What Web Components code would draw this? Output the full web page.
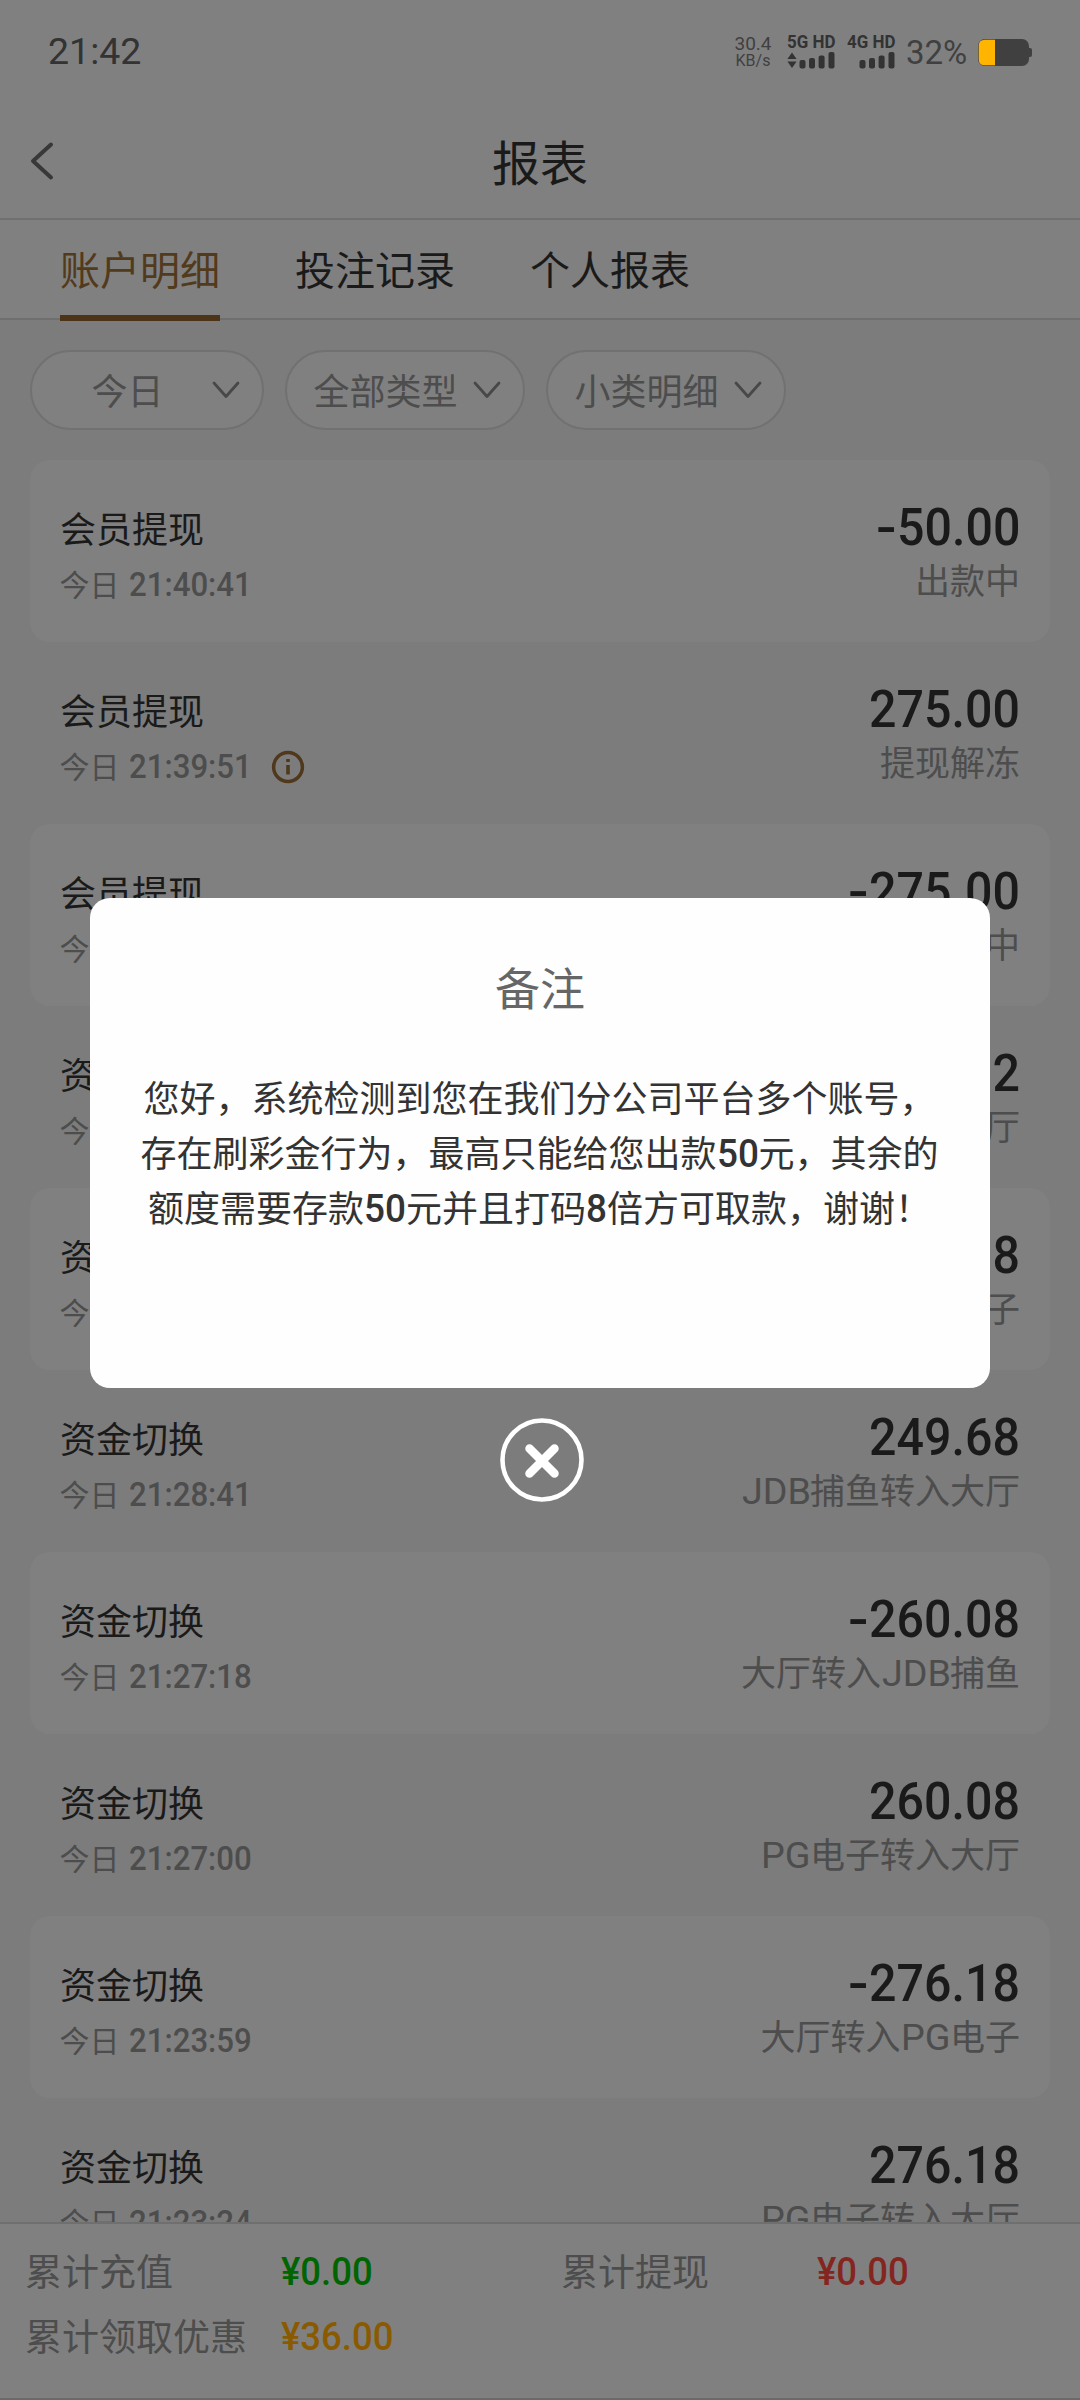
<!DOCTYPE html>
<html lang="zh-CN">
<head>
<meta charset="utf-8">
<title>报表</title>
<style>
html,body{margin:0;padding:0}
body{width:1080px;height:2400px;overflow:hidden;background:#7c7c7c;font-family:"Noto Sans CJK SC",sans-serif;color:#1a1a1a}
</style>
</head>
<body>
<report-page></report-page>
<script>
const define = (name, html, setup) => {
  const t = document.createElement('template');
  t.innerHTML = html;
  customElements.define(name, class extends HTMLElement {
    connectedCallback() {
      if (this.shadowRoot) return;
      this.attachShadow({mode: 'open'}).append(t.content.cloneNode(true));
      if (setup) setup(this, this.shadowRoot);
    }
  });
};

/* Slightly condensed numerals; `ratio` squeezes the glyphs horizontally. */
define('din-text', `<style>
:host{display:inline-block;white-space:pre;font-family:Roboto,sans-serif;font-weight:500}
span{display:inline-block;transform-origin:0 50%}
i{display:inline-block;font-style:normal;margin-right:5px;transform:scaleX(1.25);transform-origin:0 50%}
</style><span></span>`, (host, root) => {
  const s = root.querySelector('span');
  const ratio = +(host.getAttribute('ratio') || 0.95);
  s.innerHTML = host.getAttribute('value').replace(/^-/, '<i>-</i>');
  const w = s.getBoundingClientRect().width;
  s.style.transform = `scaleX(${ratio})`;
  host.style.width = w * ratio + 'px';
});

define('signal-bars', `<style>
:host{display:flex;flex-direction:column;width:49px;color:#333}
.l{font-size:18px;line-height:18px;height:19px}
svg{display:block}
</style><div class="l"></div>
<svg width="49" height="17" viewBox="0 0 49 17" fill="#333"><path class="arrows" d="M5 .5L9.6 7H.4zM5 16L9.6 9.500H.4z"/>
<rect x="12.500" y="8" width="6" height="8.500" rx="2"/><rect x="22" y="6" width="6" height="10.500" rx="2"/><rect x="31.600" y="3.500" width="6" height="13" rx="2"/><rect x="41.500" y="0" width="6" height="16.500" rx="2"/></svg>`,
(host, root) => {
  const l = root.querySelector('.l');
  l.innerHTML = `<din-text ratio="0.94" style="font-weight:700" value="${host.getAttribute('net')}"></din-text>`;
  if (!host.hasAttribute('active')) root.querySelector('.arrows').remove();
});

define('status-bar', `<style>
:host{display:flex;height:104px;box-sizing:border-box;padding:0 48px;justify-content:space-between;font-family:Roboto,sans-serif;color:#333}
.time{font-size:37.500px;line-height:44px;padding-top:29px}
.right{display:flex;padding-top:33px}
.speed{width:40px;text-align:center;margin-right:14px;font-size:19px;line-height:19px;padding-top:1px;color:#404040}
.speed small{display:block;font-size:16px;line-height:15px;margin-top:0}
signal-bars{margin-right:11px}
.pct{font-size:33px;line-height:38px;width:63px;margin:1px 9px 0 -1px;color:#404040;font-weight:400}
svg{margin-top:6px}
</style>
<div class="time">21:42</div>
<div class="right">
<div class="speed">30.4<small>KB/s</small></div>
<signal-bars net="5G HD" active></signal-bars><signal-bars net="4G HD"></signal-bars>
<div class="pct">32%</div>
<svg width="54" height="27" viewBox="0 0 54 27"><rect x="49" y="9" width="5" height="9" rx="2" fill="#404040"/><rect width="51" height="27" rx="7" fill="#404040"/><path d="M17 .7H7Q.7.700 .7 7V20Q.7 26.300 7 26.300H17z" fill="#ffb400"/></svg>
</div>`);

define('nav-bar', `<style>
:host{display:flex;height:114px;border-bottom:2px solid #6f6f6f;align-items:center;padding:0 30px}
svg{width:40px;height:44px}
h1{flex:1;margin:0 40px 0 0;text-align:center;font-size:48px;font-weight:400;line-height:60px;padding-bottom:3px}
</style>
<svg viewBox="0 0 40 44" fill="none" stroke="#383838" stroke-width="4" stroke-linecap="round" stroke-linejoin="round"><path d="M21 5.500L3 22l18 16.500"/></svg>
<h1>报表</h1>`);

define('tab-item', `<style>
:host{display:block;height:101px;box-sizing:border-box;font-size:40px;line-height:60px;padding-top:18px}
:host([active]){color:#523a1c;border-bottom:6px solid #4b3417}
</style><slot></slot>`);

define('tab-strip', `<style>
:host{display:flex;gap:75px;padding:0 60px;height:98px;border-bottom:2px solid #6f6f6f}
</style><slot></slot>`);

define('filter-pill', `<style>
:host{display:flex;align-items:center;box-sizing:border-box;width:240px;height:80px;border:2px solid #717171;border-radius:40px;background:#808080;padding:0 22.500px 0 25.500px;font-size:36px;line-height:54px;color:#4d4d4d}
span{flex:1;text-align:center;margin-right:14px;padding-bottom:3px;white-space:nowrap}
svg{width:28px;height:18px;flex:none}
</style><span><slot></slot></span>
<svg viewBox="0 0 28 18" fill="none" stroke="#484848" stroke-width="2.800" stroke-linecap="round" stroke-linejoin="round"><path d="M2 2l12 13.500L26 2"/></svg>`);

define('record-row', `<style>
:host{display:flex;justify-content:space-between;flex:none;box-sizing:border-box;height:182px;padding:0 30px;border-radius:20px}
.l{padding-top:42px}
.t{font-size:36px;line-height:50px}
.d{display:flex;align-items:center;height:40px;font-size:30px;line-height:40px;margin-top:11px;color:#4d4d4d}
.d span{margin:-1px 0 0 -.5px}
.d din-text{font-size:33px;margin-left:9px;padding-top:3px;font-weight:500}
svg{margin-left:20px;margin-top:3px}
.r{padding-top:33px;text-align:right}
.a{font-size:52px;line-height:60px;height:60px}
.s{font-size:35px;line-height:50px;margin-top:1px;color:#4d4d4d;white-space:nowrap}
.s din-text{font-size:37px;line-height:1;font-weight:400}
</style>
<div class="l"><div class="t"></div><div class="d"><span>今日</span></div></div>
<div class="r"><div class="a"></div><div class="s"></div></div>`, (host, root) => {
  const g = n => host.getAttribute(n);
  root.querySelector('.t').textContent = g('name');
  root.querySelector('.d').insertAdjacentHTML('beforeend', `<din-text ratio="0.945" value="${g('time')}"></din-text>` +
    (host.hasAttribute('info') ? '<svg width="34" height="34" viewBox="0 0 34 34" fill="none" stroke="#4f381b" stroke-width="3.500"><circle cx="17" cy="17" r="14.400"/><path d="M17 15v9.500M17 9v3" stroke-width="3.600"/></svg>' : ''));
  root.querySelector('.a').innerHTML = `<din-text ratio="0.93" value="${g('amount')}"></din-text>`;
  root.querySelector('.s').innerHTML = g('note').replace(/[A-Z]+/g, m => `<din-text ratio="1.02" value="${m}"></din-text>`);
});

define('record-list', `<style>
:host{display:flex;flex-direction:column;height:1762px;overflow:hidden;padding:0 30px}
record-row:nth-of-type(odd){background:#808080}
</style>`, (host, root) => {
  const W = '会员提现', F = '资金切换';
  [[W,'21:40:41','-50.00','出款中'],[W,'21:39:51','275.00','提现解冻',1],[W,'21:38:22','-275.00','出款中'],
   [F,'21:33:07','275.12','PG电子转入大厅'],[F,'21:28:56','-249.18','大厅转入PG电子'],[F,'21:28:41','249.68','JDB捕鱼转入大厅'],
   [F,'21:27:18','-260.08','大厅转入JDB捕鱼'],[F,'21:27:00','260.08','PG电子转入大厅'],[F,'21:23:59','-276.18','大厅转入PG电子'],
   [F,'21:23:24','276.18','PG电子转入大厅']].forEach(([name, time, amount, note, info]) => {
    const e = document.createElement('record-row');
    Object.entries({name, time, amount, note}).forEach(([k, v]) => e.setAttribute(k, v));
    if (info) e.setAttribute('info', '');
    root.append(e);
  });
});

define('total-item', `<style>
:host{display:flex;width:536px;height:65px;font-size:37px;line-height:56px;color:#4d4d4d}
span{width:256px}
din-text{font-size:39px;padding-top:2px}
</style><span><slot></slot></span>`, (host, root) => {
  root.querySelector('span').insertAdjacentHTML('afterend', `<din-text ratio="0.935" style="color:${host.getAttribute('tone')}" value="${host.getAttribute('value')}"></din-text>`);
});

define('totals-bar', `<style>
:host{display:flex;flex-wrap:wrap;align-content:flex-start;box-sizing:border-box;height:178px;border-top:2px solid #6f6f6f;border-bottom:2px solid #6a6a6a;background:#808080;padding:18px 0 0 25px;margin-right:-20px}
</style>
<total-item tone="#006400" value="¥0.00">累计充值</total-item><total-item tone="#84261f" value="¥0.00">累计提现</total-item>
<total-item tone="#8a5a00" value="¥36.00">累计领取优惠</total-item>`);

define('remark-dialog', `<style>
:host{position:absolute;left:90px;top:898px;width:900px;display:flex;flex-direction:column;align-items:center}
section{width:900px;height:490px;box-sizing:border-box;background:#fefefe;border-radius:20px;text-align:center;padding-top:56px}
h2{margin:0;font-size:45px;line-height:66px;font-weight:400;color:#666}
p{margin:49px 0 0 -1px;font-size:36px;line-height:55px;color:#333;white-space:nowrap}
din-text{font-size:38px;line-height:1}
svg{margin:29px 0 0 3px}
</style>
<section><h2>备注</h2>
<p>您好，系统检测到您在我们分公司平台多个账号，<br>存在刷彩金行为，最高只能给您出款<din-text ratio="0.970" value="50"></din-text>元，其余的<br>额度需要存款<din-text ratio="0.970" value="50"></din-text>元并且打码<din-text ratio="0.970" value="8"></din-text>倍方可取款，谢谢！</p></section>
<svg width="86" height="86" viewBox="0 0 86 86" fill="none" stroke="#fff" stroke-linecap="round"><circle cx="43" cy="43" r="39.500" stroke-width="4.600"/><path d="M30.500 31.500l25 25M55.500 31.500l-25 25" stroke-width="8.500"/></svg>`);

define('report-page', `<style>
:host{display:block;position:relative;width:1080px;height:2400px;overflow:hidden}
header{background:#808080}
.f{display:flex;gap:21px;padding:30px 30px}
.f filter-pill:first-child{width:234px}
</style>
<header><status-bar></status-bar><nav-bar></nav-bar>
<tab-strip><tab-item active>账户明细</tab-item><tab-item>投注记录</tab-item><tab-item>个人报表</tab-item></tab-strip></header>
<div class="f"><filter-pill>今日</filter-pill><filter-pill>全部类型</filter-pill><filter-pill>小类明细</filter-pill></div>
<record-list></record-list>
<totals-bar></totals-bar>
<remark-dialog></remark-dialog>`);
</script>
</body>
</html>
